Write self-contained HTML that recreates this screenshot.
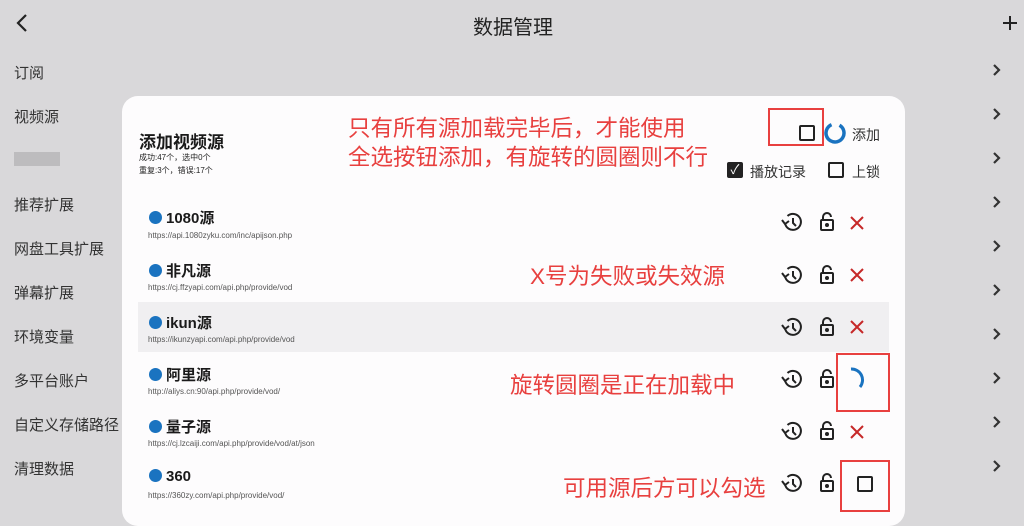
<!DOCTYPE html>
<html><head><meta charset="utf-8"><style>
body{margin:0;width:1024px;height:512px;overflow:hidden;background:#d9d8da;font-family:"Liberation Sans","Noto Sans CJK SC",sans-serif;position:relative;color:#222}
.a{position:absolute;white-space:nowrap}
.side{font-size:15px;color:#333;left:14px}
.dlg{position:absolute;left:122px;top:96px;width:783px;height:430px;background:#fdfcfd;border-radius:16px}
.title{font-size:15px;font-weight:bold;color:#1a1a1a}
.dot{display:inline-block;width:13px;height:13px;border-radius:50%;background:#1a73c0;vertical-align:-1px;margin-right:4px}
.url{font-size:8px;color:#555}
.red{color:#e8403f;font-size:22.5px}
.box{position:absolute;border:2px solid #e8403f}
.cb{position:absolute;width:12px;height:12px;border:2px solid #222;border-radius:2px}
</style></head><body>
<svg class="a" style="left:14px;top:13px" width="16" height="20"><path d="M12 2 L4 10 L12 18" fill="none" stroke="#222" stroke-width="2.2"/></svg>
<div class="a" style="left:473px;top:11px;font-size:20px;color:#222">数据管理</div>
<svg class="a" style="left:1003px;top:16px" width="14" height="14"><path d="M7 0 V14 M0 7 H14" stroke="#222" stroke-width="2"/></svg>
<div class="a side" style="top:62px">订阅</div>
<div class="a side" style="top:106px">视频源</div>
<div class="a" style="left:14px;top:152px;width:46px;height:14px;background:#bdbcbe"></div>
<div class="a side" style="top:194px">推荐扩展</div>
<div class="a side" style="top:238px">网盘工具扩展</div>
<div class="a side" style="top:282px">弹幕扩展</div>
<div class="a side" style="top:326px">环境变量</div>
<div class="a side" style="top:370px">多平台账户</div>
<div class="a side" style="top:414px">自定义存储路径</div>
<div class="a side" style="top:458px">清理数据</div>
<svg class="a" style="left:990px;top:62px" width="14" height="420" fill="none" stroke="#333" stroke-width="2.2">
<path d="M4 3 L9 8 L4 13"/><path d="M4 47 L9 52 L4 57"/><path d="M4 91 L9 96 L4 101"/><path d="M4 135 L9 140 L4 145"/><path d="M4 179 L9 184 L4 189"/><path d="M4 223 L9 228 L4 233"/><path d="M4 267 L9 272 L4 277"/><path d="M4 311 L9 316 L4 321"/><path d="M4 355 L9 360 L4 365"/><path d="M4 399 L9 404 L4 409"/>
</svg>
<div class="dlg"></div>
<div class="a" style="left:138px;top:302px;width:751px;height:50px;background:#f0eff1"></div>
<div class="a" style="left:139px;top:128px;font-size:17px;font-weight:bold;color:#1a1a1a">添加视频源</div>
<div class="a" style="left:139px;top:152px;font-size:8px">成功:47个，选中0个</div>
<div class="a" style="left:139px;top:165px;font-size:8px">重复:3个，错误:17个</div>
<div class="a red" style="left:348px;top:111px">只有所有源加载完毕后，才能使用</div>
<div class="a red" style="left:348px;top:140px">全选按钮添加，有旋转的圆圈则不行</div>
<div class="box" style="left:768px;top:108px;width:52px;height:34px"></div>
<div class="cb" style="left:799px;top:125px"></div>
<svg class="a" style="left:823px;top:121px" width="24" height="24"><circle cx="12" cy="12" r="9" fill="none" stroke="#1a73c0" stroke-width="3.5" stroke-dasharray="48 9" transform="rotate(-60 12 12)"/></svg>
<div class="a" style="left:852px;top:125px;font-size:14px;color:#333">添加</div>
<div class="a" style="left:727px;top:162px;width:16px;height:16px;background:#222;border-radius:2px;color:#fff;font-size:13px;text-align:center;line-height:16px">✓</div>
<div class="a" style="left:750px;top:162px;font-size:14px;color:#333">播放记录</div>
<div class="cb" style="left:828px;top:162px"></div>
<div class="a" style="left:852px;top:162px;font-size:14px;color:#333">上锁</div>

<div class="a title" style="left:149px;top:207px"><span class="dot"></span>1080源</div><div class="a url" style="left:148px;top:231px">https://api.1080zyku.com/inc/apijson.php</div>
<div class="a title" style="left:149px;top:260px"><span class="dot"></span>非凡源</div><div class="a url" style="left:148px;top:283px">https://cj.ffzyapi.com/api.php/provide/vod</div>
<div class="a title" style="left:149px;top:312px"><span class="dot"></span>ikun源</div><div class="a url" style="left:148px;top:335px">https://ikunzyapi.com/api.php/provide/vod</div>
<div class="a title" style="left:149px;top:364px"><span class="dot"></span>阿里源</div><div class="a url" style="left:148px;top:387px">http://aliys.cn:90/api.php/provide/vod/</div>
<div class="a title" style="left:149px;top:416px"><span class="dot"></span>量子源</div><div class="a url" style="left:148px;top:439px">https://cj.lzcaiji.com/api.php/provide/vod/at/json</div>
<div class="a title" style="left:149px;top:468px"><span class="dot"></span>360</div><div class="a url" style="left:148px;top:491px">https://360zy.com/api.php/provide/vod/</div>

<div class="a red" style="left:530px;top:259px">X号为失败或失效源</div>
<div class="a red" style="left:510px;top:368px">旋转圆圈是正在加载中</div>
<div class="a red" style="left:563px;top:471px">可用源后方可以勾选</div>

<svg class="a" style="left:770px;top:205px" width="110" height="300">
<defs>
<g id="h" fill="none" stroke="#222" stroke-width="2"><path d="M-6 1 A8 8 0 1 0 -3.5 -6"/><path d="M-9 -2 L-6 2 L-2 -1" /><path d="M2 -4 V1 L5 4"/></g>
<g id="l" fill="none" stroke="#222" stroke-width="2"><rect x="-6" y="-2" width="12" height="10" rx="1"/><path d="M-4 -2 V-5 A4 4 0 0 1 4 -5"/><circle cx="0" cy="3" r="1" fill="#222"/></g>
<g id="x" stroke="#c62828" stroke-width="2"><path d="M-6 -6 L6 6 M6 -6 L-6 6"/></g>
</defs>
<use href="#h" x="21" y="17"/><use href="#l" x="57" y="17"/><use href="#x" x="87" y="18"/>
<use href="#h" x="21" y="70"/><use href="#l" x="57" y="70"/><use href="#x" x="87" y="70"/>
<use href="#h" x="21" y="122"/><use href="#l" x="57" y="122"/><use href="#x" x="87" y="122"/>
<use href="#h" x="21" y="174"/><use href="#l" x="57" y="174"/>
<path d="M81 164 A11 11 0 0 1 90 182" fill="none" stroke="#1a73c0" stroke-width="3"/>
<use href="#h" x="21" y="226"/><use href="#l" x="57" y="226"/><use href="#x" x="87" y="227"/>
<use href="#h" x="21" y="278"/><use href="#l" x="57" y="278"/>
</svg>
<div class="box" style="left:836px;top:353px;width:50px;height:55px"></div>
<div class="box" style="left:840px;top:460px;width:46px;height:48px"></div>
<div class="cb" style="left:857px;top:476px"></div>
</body></html>
